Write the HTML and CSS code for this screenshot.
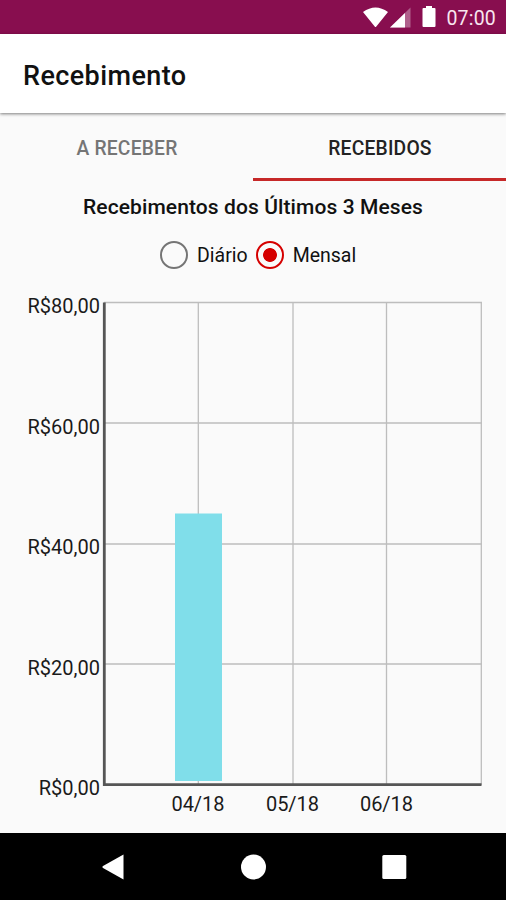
FILE: index.html
```html
<!DOCTYPE html>
<html lang="pt-BR">
<head>
  <meta charset="UTF-8">
  <meta name="viewport" content="width=device-width, initial-scale=1.0">
  <title>Recebimento</title>
  <link rel="stylesheet" href="styles.css">
</head>
<body>

<div class="status-bar">
  <svg class="status-icons" width="76" height="34" viewBox="0 0 76 34">
    <path class="icon" d="M0 12 Q12.500 3 25 12 L13.300 26.500 Q12.500 27.500 11.700 26.500 Z"/>
    <path class="icon-faded" d="M27 27.500 L47.500 7.500 V27.500 Z"/>
    <path class="icon" d="M27 27.500 L42 13 V27.500 Z"/>
    <path class="icon" d="M63 6 H69 V8 H71.500 Q72.500 8 72.500 9 V26 Q72.500 27 71.500 27 H60.500 Q59.500 27 59.500 26 V9 Q59.500 8 60.500 8 H63 Z"/>
  </svg>
  <span class="clock">07:00</span>
</div>

<header class="app-bar">
  <h1>Recebimento</h1>
</header>

<div class="tabs">
  <a class="tab"><span>A RECEBER</span></a>
  <a class="tab active"><span>RECEBIDOS</span></a>
</div>

<main class="content">
  <h2>Recebimentos dos Últimos 3 Meses</h2>

  <div class="period">
    <label class="option">
      <input type="radio" name="period">
      <span>Diário</span>
    </label>
    <label class="option">
      <input type="radio" name="period" checked>
      <span>Mensal</span>
    </label>
  </div>

  <svg class="chart" width="506" height="553" viewBox="0 280 506 553">
    <!-- grid -->
    <g class="grid">
      <path d="M104 302.500 H482"/>
      <path d="M104 423 H482"/>
      <path d="M104 544 H482"/>
      <path d="M104 664 H482"/>
      <path d="M198.300 302 V785"/>
      <path d="M293 302 V785"/>
      <path d="M386.500 302 V785"/>
      <path d="M481.300 302 V785"/>
    </g>
    <path class="axis" d="M104.300 302.500 V784.700 H481.500"/>
    <rect class="bar" x="175" y="513.500" width="47" height="267.500"/>
    <!-- values -->
    <g class="labels values">
      <text x="100" y="312.500">R$80,00</text>
      <text x="100" y="433.500">R$60,00</text>
      <text x="100" y="554">R$40,00</text>
      <text x="100" y="674.500">R$20,00</text>
      <text x="100" y="795">R$0,00</text>
    </g>
    <!-- months -->
    <g class="labels months">
      <text x="198" y="811">04/18</text>
      <text x="292.500" y="811">05/18</text>
      <text x="386.500" y="811">06/18</text>
    </g>
  </svg>
</main>

<nav class="nav-bar">
  <svg width="506" height="67" viewBox="0 0 506 67">
    <path d="M123.500 21.500 V46.500 L103 35 Q101.500 34 103 33 Z"/>
    <circle cx="253.500" cy="34" r="12.500"/>
    <rect x="382.300" y="22" width="24" height="24" rx="1.500"/>
  </svg>
</nav>

</body>
</html>
```

FILE: styles.css
```css
body {
  margin: 0;
  width: 506px;
  height: 900px;
  overflow: hidden;
  display: flex;
  flex-direction: column;
  background-color: #fafafa;
  color: #111;
  font-family: Roboto, "Liberation Sans", sans-serif;
}
.status-bar {
  height: 34px;
  background-color: #880e4f;
  color: #f8e6ef;
  display: flex;
  align-items: center;
  justify-content: flex-end;
  gap: 7px;
  padding-right: 10px;
}
.status-icons {
  display: block;
}
.icon {
  fill: #fff;
}
.icon-faded {
  fill: #b0608c;
}
.clock {
  font-size: 19.5px;
  line-height: 34px;
  padding-top: 3px;
  letter-spacing: 0.2px;
}
.app-bar {
  height: 79px;
  background-color: #fff;
  box-shadow: 0 1px 3px rgba(0, 0, 0, 0.5);
  display: flex;
  align-items: center;
  padding-left: 23px;
}
.app-bar h1 {
  margin: 4px 0 0;
  font-size: 27px;
  font-weight: 500;
  letter-spacing: 0.4px;
}
.tabs {
  display: flex;
  height: 67.5px;
}
.tab {
  flex: 1;
  display: flex;
  align-items: center;
  justify-content: center;
  box-sizing: border-box;
  border-bottom: 3px solid transparent;
  padding: 7px 0 0 1px;
  color: #757575;
  font-size: 19.3px;
  font-weight: 500;
  letter-spacing: 0.2px;
}
.tab.active {
  color: #222;
  border-bottom-color: #c62828;
}
.content h2 {
  margin: 0;
  padding-top: 14px;
  height: 25px;
  line-height: 25px;
  text-align: center;
  font-size: 21px;
  font-weight: 500;
  letter-spacing: 0.1px;
}
.period {
  display: flex;
  align-items: center;
  height: 30px;
  padding: 20px 0 0 160px;
  gap: 8px;
}
.option {
  display: flex;
  align-items: center;
  gap: 9px;
  font-size: 19.5px;
}
.option span {
  padding-top: 2px;
}
.option input {
  appearance: none;
  box-sizing: border-box;
  margin: 0;
  width: 28px;
  height: 28px;
  border: 2px solid #757575;
  border-radius: 50%;
}
.option input:checked {
  border-color: #d50000;
  background: radial-gradient(circle, #d50000 6.5px, transparent 7.3px);
}
.chart {
  display: block;
  margin-top: 10px;
}
.grid path {
  stroke: #bdbdbd;
  stroke-width: 1.3;
}
.axis {
  fill: none;
  stroke: #555;
  stroke-width: 2.8;
}
.bar {
  fill: #80deea;
}
.labels {
  fill: #1a1a1a;
  font-size: 20px;
}
.values {
  text-anchor: end;
}
.months {
  text-anchor: middle;
}
.nav-bar {
  height: 67px;
  margin-top: auto;
  background-color: #000;
}
.nav-bar svg {
  display: block;
  fill: #fff;
}
```
